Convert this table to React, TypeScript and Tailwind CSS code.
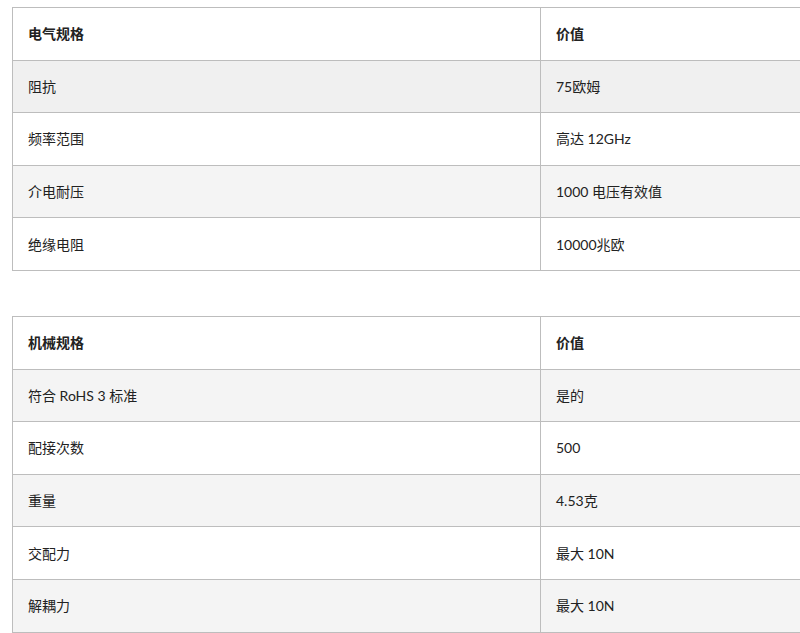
const electrical = [
  ["阻抗", "75欧姆"],
  ["频率范围", "高达 12GHz"],
  ["介电耐压", "1000 电压有效值"],
  ["绝缘电阻", "10000兆欧"],
];

const mechanical = [
  ["符合 RoHS 3 标准", "是的"],
  ["配接次数", "500"],
  ["重量", "4.53克"],
  ["交配力", "最大 10N"],
  ["解耦力", "最大 10N"],
];

function SpecTable({ title, rows, hoverFirst }: { title: string; rows: string[][]; hoverFirst?: boolean }) {
  return (
    <table className="w-[1057px] table-fixed border-collapse border border-[#bdbdbd] text-[14px] text-[#222]">
      <colgroup>
        <col className="w-[528px]" />
        <col />
      </colgroup>
      <thead>
        <tr className="h-[52.6px] bg-white">
          <th className="border border-[#bdbdbd] px-[15px] text-left font-bold">{title}</th>
          <th className="border border-[#bdbdbd] px-[15px] text-left font-bold">价值</th>
        </tr>
      </thead>
      <tbody>
        {rows.map(([k, v], i) => (
          <tr
            key={k}
            className={
              "h-[52.6px] " +
              (i % 2 === 0 ? (hoverFirst && i === 0 ? "bg-[#f0f0f0]" : "bg-[#f4f4f4]") : "bg-white")
            }
          >
            <td className="border border-[#bdbdbd] px-[15px]">{k}</td>
            <td className="border border-[#bdbdbd] px-[15px]">{v}</td>
          </tr>
        ))}
      </tbody>
    </table>
  );
}

export default function App() {
  return (
    <div
      className="h-[633px] w-[800px] overflow-hidden bg-white pl-[12px] pt-[7px]"
      style={{ fontFamily: 'Lato, "Noto Sans CJK SC", sans-serif' }}
    >
      <div className="flex flex-col gap-[45px]">
        <SpecTable title="电气规格" rows={electrical} hoverFirst />
        <SpecTable title="机械规格" rows={mechanical} />
      </div>
    </div>
  );
}
